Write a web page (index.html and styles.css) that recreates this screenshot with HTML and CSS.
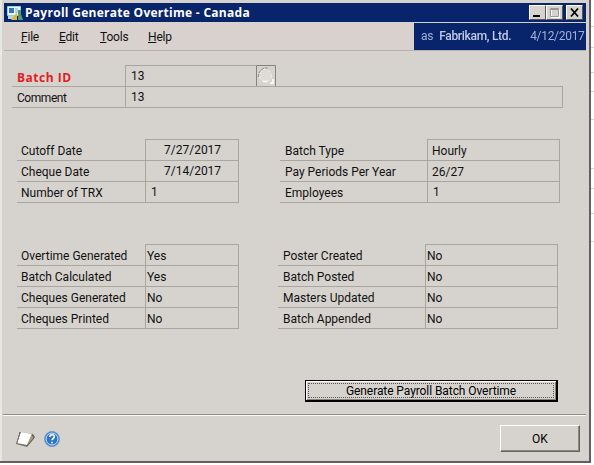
FILE: index.html
```html
<!DOCTYPE html>
<html lang="en">
<head>
<meta charset="utf-8">
<title>Payroll Generate Overtime - Canada</title>
<link rel="stylesheet" href="styles.css">
</head>
<body>
<main class="window">
  <header class="titlebar">
    <svg class="app-icon" width="18" height="18" viewBox="0 0 18 18">
      <path d="M1.5 2.5h13v9h-13z" fill="#eef8fb" stroke="#9bcde5"/>
      <path d="M3 4h5v5H3z" fill="#2f79c4"/><path d="M9 4h3v5H9z" fill="#aed4ec"/>
      <path d="M2 12h6v3H2z" fill="#a9d9f0"/>
      <path d="M5 16l6-8v8z" fill="#e8b62e"/><path d="M12 6h3v4l2 6h-5z" fill="#4c9a7e"/>
    </svg>
    <h1>Payroll Generate Overtime - Canada</h1>
    <div class="controls">
      <button class="control" aria-label="Minimize"><svg width="15" height="13"><path d="M3 9h7v2H3z"/></svg></button>
      <button class="control" aria-label="Maximize"><svg width="15" height="13"><path d="M4.500 3.500h8v8h-8z" fill="none" stroke="#fff"/><path d="M3.500 2.500h8v8h-8zM3 3.500h9" fill="none" stroke="#999"/></svg></button>
      <button class="control close" aria-label="Close"><svg width="15" height="13"><path d="M4 2.500l7 8M11 2.500l-7 8" stroke="#000" stroke-width="1.8"/></svg></button>
    </div>
  </header>
  <nav class="menubar">
    <span class="menu file"><u>F</u>ile</span><span class="menu edit"><u>E</u>dit</span><span class="menu tools"><u>T</u>ools</span><span class="menu help"><u>H</u>elp</span>
    <div class="company"><span>as</span><span class="name">Fabrikam, Ltd.</span><span>4/12/2017</span></div>
  </nav>
  <section class="batch">
    <div class="batch-row"><b class="batch-label">Batch ID</b><span class="batch-value id-value">13</span>
      <svg class="lookup" width="20" height="22"><path d="M.5.5h19v21H.5z" fill="#d6d3ce" stroke="#858380"/><circle cx="9.500" cy="10.500" r="6" fill="#dddbd7" stroke="#f1f0ee" stroke-dasharray="3 2"/><path d="M2.500 12a8 8 0 0 1 9-9" fill="none" stroke="#8a8884" stroke-dasharray="3 1"/><path d="M7 16.500h4M14 18h3v-4" fill="none" stroke="#fff" stroke-width="1.500"/></svg>
    </div>
    <div class="batch-row comment"><span class="batch-label">Comment</span><span class="batch-value">13</span></div>
  </section>
  <div class="tables summary">
    <dl class="table">
      <dt>Cutoff Date</dt><dd class="date">7/27/2017</dd>
      <dt>Cheque Date</dt><dd class="date">7/14/2017</dd>
      <dt>Number of TRX</dt><dd class="number">1</dd>
    </dl>
    <dl class="table right">
      <dt>Batch Type</dt><dd>Hourly</dd>
      <dt>Pay Periods Per Year</dt><dd>26/27</dd>
      <dt>Employees</dt><dd class="one">1</dd>
    </dl>
  </div>
  <div class="tables status">
    <dl class="table">
      <dt>Overtime Generated</dt><dd>Yes</dd>
      <dt>Batch Calculated</dt><dd>Yes</dd>
      <dt>Cheques Generated</dt><dd>No</dd>
      <dt>Cheques Printed</dt><dd>No</dd>
    </dl>
    <dl class="table right">
      <dt>Poster Created</dt><dd>No</dd>
      <dt>Batch Posted</dt><dd>No</dd>
      <dt>Masters Updated</dt><dd>No</dd>
      <dt>Batch Appended</dt><dd>No</dd>
    </dl>
  </div>
  <div class="action"><button class="generate"><span>Generate Payroll Batch Overtime</span></button></div>
  <footer class="footer">
    <svg class="note" width="22" height="20" viewBox="0 0 22 20"><path d="M5 2L1 14l11 3 8-10-2-3z" fill="#777268"/><path d="M6 2l11 2-5 11L2 13z" fill="#fff"/><path d="M17 4l2 4-7 8" fill="#a39a82" stroke="#5d5a53"/><path d="M5 2L2 13" stroke="#55524e" stroke-dasharray="2 1"/></svg>
    <svg class="help-icon" width="18" height="18" viewBox="0 0 18 18"><circle cx="9" cy="9" r="7.500" fill="#2e74c4" stroke="#719aca"/><circle cx="9" cy="9" r="6" fill="none" stroke="#d8e8f7"/><path d="M6.800 7c0-3 4.500-3 4.500-.4 0 1.700-2.200 1.700-2.200 3.600M9 11.800v1.500" fill="none" stroke="#fff" stroke-width="1.600"/></svg>
    <button class="ok">OK</button>
  </footer>
</main>
<aside class="backdrop"><i></i><i></i><i></i><i></i><i></i><i></i><i></i><i></i><i></i></aside>
</body>
</html>
```
FILE: styles.css
```css
* { box-sizing: border-box; }
body { margin: 0; width: 594px; height: 465px; display: flex; background: #fff; color: #111; font: 12px/20px Roboto, sans-serif; overflow: hidden; }
button { margin: 0; padding: 0; color: #000; font: inherit; border-radius: 0; }
.window { width: 591px; height: 463px; padding: 3px 3px 0 4px; background: #d6d3ce; border-right: 2px solid #62605f; border-bottom: 2px solid #62605f; box-shadow: inset 2px 0 #e9e7e3; flex: none; }
.titlebar { width: 582px; height: 19px; display: flex; align-items: center; background: #08246b; color: #fff; }
.app-icon { margin-left: 2px; flex: none; }
h1 { margin: 0 auto 0 1px; font: bold 12px/19px "Open Sans", sans-serif; letter-spacing: .28px; white-space: nowrap; }
.controls { display: flex; margin-right: 3px; }
.control { width: 17px; height: 15px; background: #d6d3ce; border: 1px solid; border-color: #fff #555 #555 #fff; }
.control svg { display: block; }
.close { margin-left: 3px; }
.menubar { width: 582px; height: 28px; margin-top: 1px; display: flex; background: #d9d1cd; border-bottom: 1px solid #b5b2ad; line-height: 28px; }
.menu { flex: none; letter-spacing: -.2px; }
.file { width: 38px; margin-left: 17px; }
.edit { width: 41px; }
.tools { width: 48px; }
.company { width: 172px; height: 27px; margin-left: auto; padding-left: 7px; display: flex; gap: 6px; background: #08246b; color: #a3afd6; line-height: 27px; letter-spacing: -.3px; white-space: nowrap; }
.company span { filter: blur(.7px); }
.company .name { width: 85px; color: #c3cbe6; font-weight: 500; }
.batch { margin: 14px 0 0 8px; width: 551px; }
.batch-row { height: 21px; display: flex; }
.batch-label { width: 113px; height: 22px; padding-left: 5px; border-bottom: 1px solid #aaa69f; line-height: 24px; flex: none; }
.comment .batch-label { letter-spacing: -.45px; }
b.batch-label { color: #e31c23; font: bold 12px/25px "Open Sans", sans-serif; letter-spacing: .5px; }
.batch-value { height: 22px; padding-left: 5px; border: 1px solid #aaa69f; border-right: 0; flex: 1; }
.id-value { flex: 0 0 131px; }
.batch-row:first-child::after { content: ""; flex: 1; }
.comment .batch-value { border-right: 1px solid #aaa69f; }
.lookup { flex: none; }
.tables { display: flex; }
.summary { margin: 32px 0 0 13px; gap: 41px; }
.table { display: grid; grid-template-columns: 128px 94px; grid-auto-rows: 21px; margin: 0; }
.table.right { grid-template-columns: 147px 133px; }
dt { height: 22px; padding: 1px 0 0 5px; border-bottom: 1px solid #aaa69f; line-height: 23px; white-space: nowrap; }
.table:not(.right) dt { padding-left: 4px; }
dd { height: 22px; margin: 0; padding: 1px 0 0 1px; border: 1px solid #aaa69f; line-height: 21px; }
.table .date { padding-left: 18px; line-height: 19px; }
.table .number { padding-left: 5px; line-height: 19px; }
.summary .right dd { padding-left: 4px; }
.summary .right .one { padding-left: 5px; line-height: 19px; }
.status { margin: 42px 0 0 13px; gap: 39px; }
.action { margin: 52px 28px 0 0; display: flex; justify-content: flex-end; }
.generate { width: 253px; height: 22px; padding: 2px; background: #d6d3ce; border: 1px solid #000; border-right-width: 2px; border-bottom-width: 2px; box-shadow: inset 1px 1px #fff, inset -1px -1px #87847e; }
.generate span { display: block; height: 15px; border: 1px dotted #555; line-height: 14px; letter-spacing: -.08px; }
.footer { width: 583px; margin: 12px 0 0 -1px; height: 46px; display: flex; border-top: 1px solid #908d87; box-shadow: inset 0 1px #f9f8f5; }
.note { margin: 15px 0 0 12px; }
.help-icon { margin: 15px 0 0 6px; }
.ok { width: 80px; height: 27px; margin: 10px 6px 0 auto; background: #d6d3ce; border: 1px solid; border-color: #fff #656360 #656360 #fff; box-shadow: inset -1px -1px #8c8983; line-height: 26px; }
.backdrop { width: 3px; height: 465px; display: grid; grid-template-rows: 27px 21px 25px 19px 28px 49px 20px 25px 28px; }
.backdrop i { border-bottom: 1px solid #d5d2d2; }
```
